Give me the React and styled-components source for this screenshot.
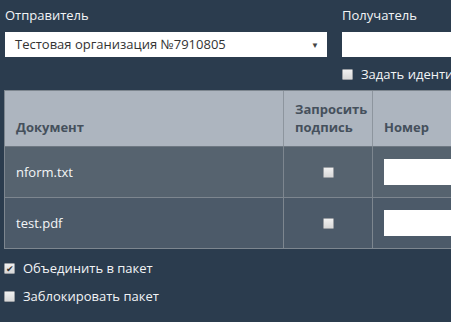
import styled, { createGlobalStyle } from "styled-components";

const GlobalStyle = createGlobalStyle`
	html, body {
		margin: 0;
		padding: 0;
		background: #2b3c4e;
		overflow: hidden;
		font-family: "Open Sans", "Liberation Sans", sans-serif;
	}
`;

const Page = styled.div`
	width: 451px;
	height: 322px;
	padding-left: 4px;
	box-sizing: border-box;
	overflow: hidden;
`;

const TopRow = styled.div`
	display: flex;
	gap: 15px;
	padding-top: 6px;
	width: 700px;
`;

const Field = styled.div`
	display: flex;
	flex-direction: column;
	width: ${(p) => p.width}px;
	padding-left: ${(p) => p.indent || 0}px;
`;

const Label = styled.div`
	color: #f2f4f6;
	font-size: 13px;
	line-height: 18px;
	margin-bottom: 8px;
`;

const Select = styled.div`
	position: relative;
	height: 25px;
	background: #fff;
	color: #333;
	font-size: 13px;
	line-height: 25px;
	padding-left: 10px;
`;

const Arrow = styled.span`
	position: absolute;
	right: 8px;
	top: 0;
	font-size: 8px;
	color: #444;
`;

const Input = styled.div`
	height: 25px;
	background: #fff;
`;

const CheckRow = styled.label`
	display: flex;
	align-items: center;
	gap: 8px;
	color: #f2f4f6;
	font-size: 13px;
	height: 18px;
	margin-top: ${(p) => p.top || 0}px;
	white-space: nowrap;
`;

const Box = styled.span`
	width: 9px;
	height: 9px;
	flex: none;
	border: 1px solid #9a9ea3;
	border-radius: 1px;
	background: linear-gradient(#f0f0f0, #d8d8d8);
	display: flex;
	align-items: center;
	justify-content: center;
	color: #333;
	font-size: 9px;
	line-height: 9px;
`;

const Table = styled.div`
	margin-top: 7px;
	width: 620px;
	border: 1px solid #7d868f;
	display: grid;
	grid-template-columns: 278px 89px 1fr;
`;

const Head = styled.div`
	background: #adb5bf;
	color: #45505c;
	font-weight: 700;
	font-size: 13px;
	line-height: 18px;
	height: 56px;
	box-sizing: border-box;
	padding: 0 11px 10px 11px;
	display: flex;
	align-items: flex-end;
	border-left: ${(p) => (p.first ? "none" : "1px solid #8d959e")};
	border-bottom: 1px solid #6e7882;
`;

const Cell = styled.div`
	background: ${(p) => (p.alt ? "#4c5a69" : "#56636f")};
	color: #f4f6f8;
	font-size: 13px;
	height: 50px;
	display: flex;
	align-items: center;
	justify-content: ${(p) => (p.center ? "center" : "flex-start")};
	padding-left: ${(p) => (p.center ? 0 : 11)}px;
	border-left: ${(p) => (p.first ? "none" : "1px solid #7d868f")};
	border-top: ${(p) => (p.alt ? "1px solid #7d868f" : "none")};
`;

const NumberInput = styled.div`
	width: 200px;
	height: 26px;
	background: #fff;
`;

const Options = styled.div`
	display: flex;
	flex-direction: column;
	gap: 10px;
	margin-top: 10px;
`;

const rows = [
	{ name: "nform.txt" },
	{ name: "test.pdf", alt: true },
];

export default function App() {
	return (
		<Page>
			<GlobalStyle />
			<TopRow>
				<Field width={322} indent={1}>
					<Label>Отправитель</Label>
					<Select>
						Тестовая организация №7910805
						<Arrow>▼</Arrow>
					</Select>
				</Field>
				<Field width={300}>
					<Label>Получатель</Label>
					<Input />
					<CheckRow top={8}>
						<Box />
						Задать идентификатор
					</CheckRow>
				</Field>
			</TopRow>
			<Table>
				<Head first>Документ</Head>
				<Head>Запросить подпись</Head>
				<Head>Номер</Head>
				{rows.map((r) => (
					<>
						<Cell first alt={r.alt} key={r.name + "a"}>{r.name}</Cell>
						<Cell center alt={r.alt} key={r.name + "b"}>
							<Box />
						</Cell>
						<Cell alt={r.alt} key={r.name + "c"}>
							<NumberInput />
						</Cell>
					</>
				))}
			</Table>
			<Options>
				<CheckRow>
					<Box>✔</Box>
					Объединить в пакет
				</CheckRow>
				<CheckRow>
					<Box />
					Заблокировать пакет
				</CheckRow>
			</Options>
		</Page>
	);
}
